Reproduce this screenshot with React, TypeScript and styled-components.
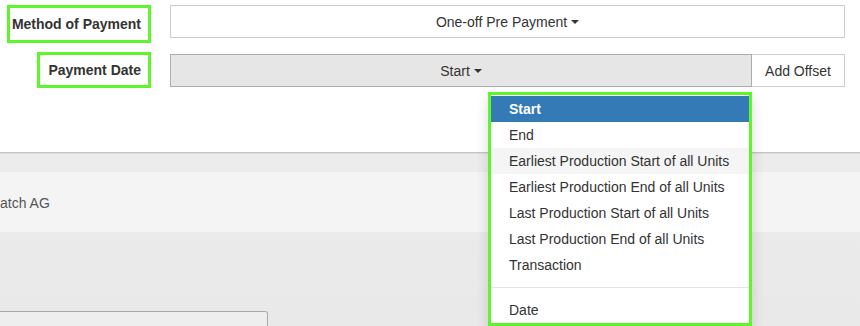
import styled, { createGlobalStyle } from "styled-components";

const GlobalStyle = createGlobalStyle`
  html, body {
    margin: 0;
    padding: 0;
    background: #ececec;
  }
  body {
    font-family: "Liberation Sans", Arial, sans-serif;
    font-size: 14px;
    color: #333;
  }
`;

const Page = styled.div`
  width: 860px;
  height: 326px;
  overflow: hidden;
  position: relative;
  background: linear-gradient(#eeeeee, #e9e9e9);
`;

const TopPanel = styled.div`
  background: #fff;
  height: 153px;
  box-sizing: border-box;
  padding-top: 5px;
  border-bottom: 1px solid #c4c4c4;
  box-shadow: 0 1px 1px rgba(0, 0, 0, 0.06);
`;

const Row = styled.div<{ $top?: number }>`
  display: flex;
  align-items: flex-start;
  margin-top: ${(p) => p.$top ?? 0}px;
`;

const LabelCol = styled.div`
  width: 151px;
  display: flex;
  justify-content: flex-end;
`;

const Label = styled.label<{ $h: number; $pl: number }>`
  display: flex;
  align-items: center;
  height: ${(p) => p.$h}px;
  box-sizing: border-box;
  border: 3px solid #5ef52c;
  padding: 0 7px 0 ${(p) => p.$pl}px;
  font-weight: bold;
  font-size: 14px;
  color: #333;
  white-space: nowrap;
`;

const Control = styled.div<{ $offset?: number }>`
  margin-left: 19px;
  margin-top: ${(p) => p.$offset ?? 0}px;
  width: 675px;
  display: flex;
  position: relative;
`;

const SelectButton = styled.div<{ $active?: boolean }>`
  flex: 1;
  height: 33px;
  box-sizing: border-box;
  display: flex;
  align-items: center;
  justify-content: center;
  border: 1px solid ${(p) => (p.$active ? "#adadad" : "#ccc")};
  background: ${(p) => (p.$active ? "#e6e6e6" : "#fff")};
  color: #333;
  font-size: 14px;
`;

const Caret = styled.span`
  display: inline-block;
  width: 0;
  height: 0;
  margin-left: 4px;
  border-top: 4px solid #333;
  border-left: 4px solid transparent;
  border-right: 4px solid transparent;
`;

const Addon = styled.div`
  height: 33px;
  width: 93px;
  box-sizing: border-box;
  display: flex;
  align-items: center;
  justify-content: center;
  border: 1px solid #ccc;
  border-left: none;
  background: #fff;
  font-size: 14px;
  color: #333;
`;

const Menu = styled.ul`
  position: absolute;
  top: 38px;
  right: 93px;
  width: 264px;
  box-sizing: border-box;
  margin: 0;
  padding: 1px 0 0;
  list-style: none;
  background: #fff;
  border: 3px solid #5ef52c;
  box-shadow: 0 6px 12px rgba(0, 0, 0, 0.15);
  z-index: 5;
`;

const MenuItem = styled.li<{ $active?: boolean; $hover?: boolean }>`
  height: 26px;
  line-height: 26px;
  padding: 0 18px;
  white-space: nowrap;
  font-size: 14px;
  color: ${(p) => (p.$active ? "#fff" : "#333")};
  font-weight: ${(p) => (p.$active ? "bold" : "normal")};
  background: ${(p) =>
    p.$active ? "#337ab7" : p.$hover ? "#f5f5f5" : "transparent"};
`;

const Divider = styled.li`
  height: 1px;
  margin: 9px 0;
  background: #e5e5e5;
`;

const Band = styled.div`
  margin-top: 19px;
  height: 60px;
  padding-top: 2px;
  box-sizing: border-box;
  background: #f4f4f4;
  display: flex;
  align-items: center;
  font-size: 14px;
  color: #555;
`;

const BottomBox = styled.div`
  margin-top: 79px;
  width: 268px;
  height: 30px;
  box-sizing: border-box;
  border: 1px solid #aaa;
  border-left: none;
  border-top-right-radius: 3px;
  background: #eeeeee;
`;

const menuItems = [
  "Start",
  "End",
  "Earliest Production Start of all Units",
  "Earliest Production End of all Units",
  "Last Production Start of all Units",
  "Last Production End of all Units",
  "Transaction",
];

export default function App() {
  return (
    <Page>
      <GlobalStyle />
      <TopPanel>
        <Row>
          <LabelCol>
            <Label $h={38} $pl={2}>Method of Payment</Label>
          </LabelCol>
          <Control>
            <SelectButton>
              One-off Pre Payment
              <Caret />
            </SelectButton>
          </Control>
        </Row>
        <Row $top={9}>
          <LabelCol>
            <Label $h={36} $pl={8}>Payment Date</Label>
          </LabelCol>
          <Control $offset={2}>
            <SelectButton $active>
              Start
              <Caret />
            </SelectButton>
            <Addon>Add Offset</Addon>
            <Menu>
              {menuItems.map((item, i) => (
                <MenuItem key={item} $active={i === 0} $hover={i === 2}>
                  {item}
                </MenuItem>
              ))}
              <Divider />
              <MenuItem>Date</MenuItem>
            </Menu>
          </Control>
        </Row>
      </TopPanel>
      <Band>atch AG</Band>
      <BottomBox />
    </Page>
  );
}
